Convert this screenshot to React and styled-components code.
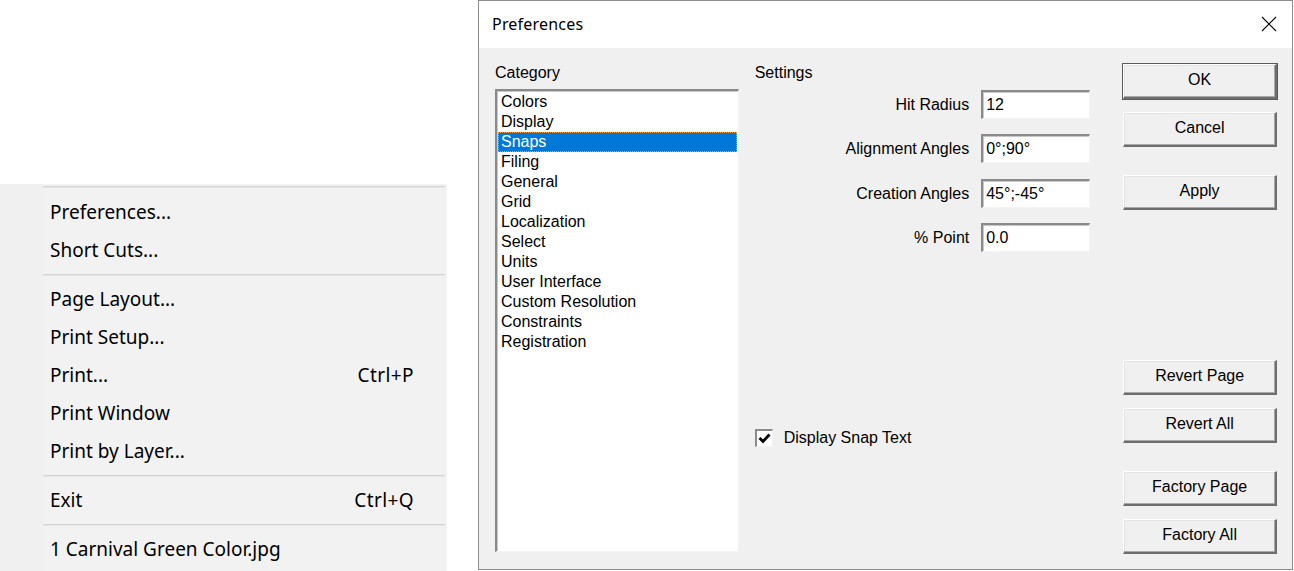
import React from "react";
import styled, { createGlobalStyle } from "styled-components";

const GlobalStyle = createGlobalStyle`
  html, body {
    margin: 0;
    padding: 0;
    background: #ffffff;
  }
  * {
    box-sizing: border-box;
  }
`;

const Page = styled.div`
  display: flex;
  align-items: flex-start;
  width: 1294px;
  height: 571px;
  overflow: hidden;
`;

/* ---------- file menu ---------- */

const Menu = styled.div`
  width: 447px;
  height: 387px;
  margin-top: 184px;
  background: linear-gradient(to right, #f0f0f0 43px, #f2f2f2 43px);
  font-family: "Noto Sans", "Open Sans", sans-serif;
  font-size: 19px;
  color: #000;
`;

const MenuSeparator = styled.div`
  height: ${(p) => p.$h || 11}px;
  padding-top: ${(p) => p.$top || 5}px;
  padding-left: 43px;
  padding-right: 2px;

  &::after {
    content: "";
    display: block;
    height: 1px;
    background: #d4d4d4;
    box-shadow: 0 1px 0 #e6e6e6;
  }
`;

const MenuItem = styled.div`
  height: 38px;
  display: flex;
  align-items: center;
  justify-content: space-between;
  padding-left: 50px;
  padding-right: 33px;
  white-space: nowrap;
`;

const Shortcut = styled.span`
  font-size: 19px;
  letter-spacing: 0.4px;
`;

/* ---------- preferences dialog ---------- */

const Dialog = styled.div`
  margin-left: 31px;
  width: 815px;
  height: 570px;
  border: 1px solid #8c8c8c;
  background: #f0f0f0;
  display: flex;
  flex-direction: column;
`;

const TitleBar = styled.div`
  height: 47px;
  background: #ffffff;
  display: flex;
  align-items: center;
  justify-content: space-between;
  padding-left: 13px;
  padding-right: 14px;
  padding-bottom: 1px;
  font-family: "Noto Sans", "Open Sans", sans-serif;
  font-size: 16px;
  letter-spacing: 0.2px;
  color: #000;
`;

const CloseButton = styled.span`
  display: flex;
  width: 18px;
  height: 18px;
  align-items: center;
  justify-content: center;
`;

const Body = styled.div`
  flex: 1;
  display: flex;
  padding: 16px 15px 0 16px;
  font-family: "Liberation Sans", Arial, sans-serif;
  font-size: 16px;
  color: #000;
`;

const CategoryColumn = styled.div`
  width: 244px;
  display: flex;
  flex-direction: column;
`;

const GroupLabel = styled.div`
  height: 18px;
  line-height: 18px;
  margin-bottom: 7px;
`;

const ListBox = styled.div`
  height: 463px;
  background: #fff;
  border-style: solid;
  border-width: 2px 1px 1px 2px;
  border-color: #8a8a8a #f4f4f4 #f4f4f4 #8a8a8a;
  box-shadow: inset 1px 1px 0 #c8c8c8;
  padding: 1px 1px 0 1px;
`;

const ListItem = styled.div`
  height: 20px;
  line-height: 20px;
  padding-left: 3px;
  background: ${(p) => (p.$selected ? "#0078d7" : "transparent")};
  color: ${(p) => (p.$selected ? "#fff" : "#000")};
  outline: ${(p) => (p.$selected ? "1px dotted #f7a046" : "none")};
  outline-offset: -1px;
`;

const SettingsColumn = styled.div`
  width: 336px;
  margin-left: 16px;
  display: flex;
  flex-direction: column;
`;

const FieldRow = styled.div`
  display: flex;
  align-items: center;
  justify-content: flex-end;
  height: 29px;
  margin-top: ${(p) => p.$gap}px;
`;

const FieldLabel = styled.label`
  margin-right: 12px;
  white-space: nowrap;
`;

const TextBox = styled.div`
  width: 109px;
  height: 29px;
  background: #fff;
  border-style: solid;
  border-width: 2px 1px 1px 2px;
  border-color: #8a8a8a #f4f4f4 #f4f4f4 #8a8a8a;
  box-shadow: inset 1px 1px 0 #c8c8c8;
  padding-left: 3px;
  line-height: 25px;
  white-space: nowrap;
`;

const CheckRow = styled.div`
  display: flex;
  align-items: center;
  margin-top: 177px;
  height: 18px;
`;

const CheckBox = styled.span`
  width: 18px;
  height: 18px;
  background: #fff;
  border-style: solid;
  border-width: 2px 1px 1px 2px;
  border-color: #8a8a8a #f4f4f4 #f4f4f4 #8a8a8a;
  display: flex;
  align-items: center;
  justify-content: center;
  margin-right: 11px;
`;

const ButtonColumn = styled.div`
  width: 154px;
  margin-left: 33px;
  display: flex;
  flex-direction: column;
`;

const Button = styled.div`
  height: 35px;
  margin-top: ${(p) => p.$gap || 0}px;
  display: flex;
  align-items: center;
  justify-content: center;
  background: #f0f0f0;
  border-style: solid;
  border-width: 1px 2px 2px 1px;
  border-color: #ffffff #6e6e6e #6e6e6e #ffffff;
  box-shadow: ${(p) =>
    p.$default
      ? "0 0 0 1px #5a5a5a, inset -1px -1px 0 #a8a8a8, inset 1px 1px 0 #e3e3e3"
      : "inset -1px -1px 0 #a8a8a8, inset 1px 1px 0 #e3e3e3"};
  padding-bottom: 2px;
  white-space: nowrap;
`;

const categories = [
  "Colors",
  "Display",
  "Snaps",
  "Filing",
  "General",
  "Grid",
  "Localization",
  "Select",
  "Units",
  "User Interface",
  "Custom Resolution",
  "Constraints",
  "Registration",
];

const fields = [
  { label: "Hit Radius", value: "12", gap: 1 },
  { label: "Alignment Angles", value: "0°;90°", gap: 15 },
  { label: "Creation Angles", value: "45°;-45°", gap: 16 },
  { label: "% Point", value: "0.0", gap: 15 },
];

const buttons = [
  { label: "OK", gap: 0, def: true },
  { label: "Cancel", gap: 13 },
  { label: "Apply", gap: 28 },
  { label: "Revert Page", gap: 150 },
  { label: "Revert All", gap: 13 },
  { label: "Factory Page", gap: 28 },
  { label: "Factory All", gap: 13 },
];

export default function App() {
  return (
    <>
      <GlobalStyle />
      <Page>
        <Menu>
          <MenuSeparator $h={9} $top={2} />
          <MenuItem>Preferences...</MenuItem>
          <MenuItem>Short Cuts...</MenuItem>
          <MenuSeparator />
          <MenuItem>Page Layout...</MenuItem>
          <MenuItem>Print Setup...</MenuItem>
          <MenuItem>
            Print...<Shortcut>Ctrl+P</Shortcut>
          </MenuItem>
          <MenuItem>Print Window</MenuItem>
          <MenuItem>Print by Layer...</MenuItem>
          <MenuSeparator />
          <MenuItem>
            Exit<Shortcut>Ctrl+Q</Shortcut>
          </MenuItem>
          <MenuSeparator />
          <MenuItem>1 Carnival Green Color.jpg</MenuItem>
        </Menu>

        <Dialog>
          <TitleBar>
            Preferences
            <CloseButton>
              <svg width="16" height="16" viewBox="0 0 16 16">
                <path d="M1 1 L15 15 M15 1 L1 15" stroke="#000" strokeWidth="1.1" fill="none" />
              </svg>
            </CloseButton>
          </TitleBar>

          <Body>
            <CategoryColumn>
              <GroupLabel>Category</GroupLabel>
              <ListBox>
                {categories.map((c) => (
                  <ListItem key={c} $selected={c === "Snaps"}>
                    {c}
                  </ListItem>
                ))}
              </ListBox>
            </CategoryColumn>

            <SettingsColumn>
              <GroupLabel>Settings</GroupLabel>
              {fields.map((f) => (
                <FieldRow key={f.label} $gap={f.gap}>
                  <FieldLabel>{f.label}</FieldLabel>
                  <TextBox>{f.value}</TextBox>
                </FieldRow>
              ))}
              <CheckRow>
                <CheckBox>
                  <svg width="13" height="13" viewBox="0 0 13 13">
                    <path d="M1.5 6 L5 9.5 L11.5 2.5" stroke="#000" strokeWidth="2.8" fill="none" />
                  </svg>
                </CheckBox>
                Display Snap Text
              </CheckRow>
            </SettingsColumn>

            <ButtonColumn>
              {buttons.map((b) => (
                <Button key={b.label} $gap={b.gap} $default={b.def}>
                  {b.label}
                </Button>
              ))}
            </ButtonColumn>
          </Body>
        </Dialog>
      </Page>
    </>
  );
}
